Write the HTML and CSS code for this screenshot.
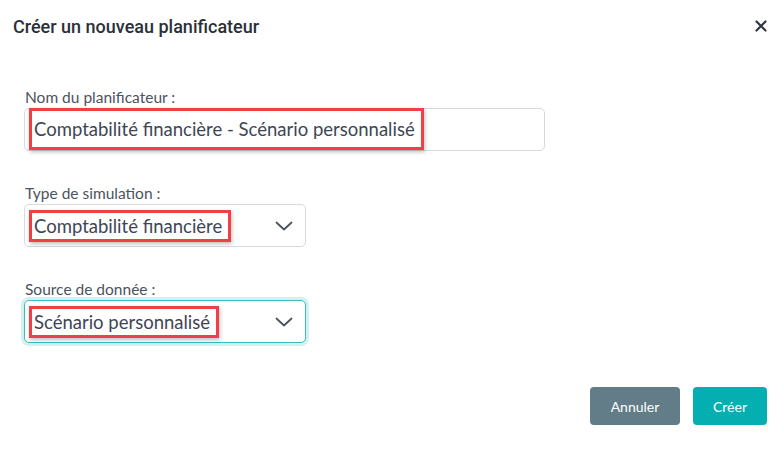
FILE: index.html
```html
<!DOCTYPE html>
<html lang="fr">
<head>
<meta charset="utf-8">
<title>Créer un nouveau planificateur</title>
<link rel="stylesheet" href="styles.css">
</head>
<body>
<div class="modal">
  <div class="header">
    <h1 class="title">Créer un nouveau planificateur</h1>
    <span class="close">
      <svg width="12" height="12" viewBox="0 0 12 12"><path d="M1.5 1.5 L10.5 10.5 M10.5 1.5 L1.5 10.5" stroke="#2f3640" stroke-width="2.2" stroke-linecap="round"/></svg>
    </span>
  </div>
  <div class="body">
    <div class="field">
      <label class="label">Nom du planificateur :</label>
      <div class="control wide">
        <span class="mark">Comptabilité financière - Scénario personnalisé</span>
      </div>
    </div>
    <div class="field">
      <label class="label">Type de simulation :</label>
      <div class="control select">
        <span class="mark">Comptabilité financière</span>
        <svg class="chev" width="18" height="10" viewBox="0 0 18 10"><path d="M1.5 1.5 L9 8.5 L16.5 1.5" fill="none" stroke="#4a5462" stroke-width="1.8" stroke-linecap="round" stroke-linejoin="round"/></svg>
      </div>
    </div>
    <div class="field">
      <label class="label">Source de donnée :</label>
      <div class="control select focus">
        <span class="mark">Scénario personnalisé</span>
        <svg class="chev" width="18" height="10" viewBox="0 0 18 10"><path d="M1.5 1.5 L9 8.5 L16.5 1.5" fill="none" stroke="#4a5462" stroke-width="1.8" stroke-linecap="round" stroke-linejoin="round"/></svg>
      </div>
    </div>
  </div>
  <div class="footer">
    <button class="btn cancel">Annuler</button>
    <button class="btn primary">Créer</button>
  </div>
</div>
</body>
</html>
```
FILE: styles.css
```css
* { box-sizing: border-box; }
html, body { margin: 0; padding: 0; background: #fff; }
body {
  width: 784px;
  height: 449px;
  font-family: "Lato", "Noto Sans", sans-serif;
  color: #3d4550;
  overflow: hidden;
}
.modal { display: flex; flex-direction: column; height: 449px; }
.header {
  display: flex;
  justify-content: space-between;
  align-items: center;
  padding: 14px 17px 0 13px;
  height: 38px;
}
.title {
  margin: 0;
  font-family: "Roboto", "Noto Sans", sans-serif;
  font-size: 18px;
  font-weight: 500;
  color: #2b3038;
}
.close { display: flex; width: 12px; height: 12px; }
.body {
  display: flex;
  flex-direction: column;
  gap: 33px;
  padding: 50px 0 0 24px;
}
.field { display: flex; flex-direction: column; }
.label {
  font-size: 15.5px;
  color: #4b535e;
  margin: 0 0 2px 1px;
  line-height: 18px;
}
.control {
  display: flex;
  align-items: center;
  height: 43px;
  border: 1px solid #d6d9de;
  border-radius: 5px;
  padding: 0 0 0 4px;
  background: #fff;
}
.control.wide { width: 521px; }
.control.select { width: 282px; justify-content: space-between; padding-right: 12px; }
.control.focus {
  border-color: #3cbcbe;
  box-shadow: 0 0 0 3px #d3f0f0;
}
.mark {
  border: 3px solid #ee4046;
  padding: 2px 6px 2px 2px;
  font-size: 18.5px;
  line-height: 22px;
  color: #3e4654;
  box-shadow: 1px 2px 4px rgba(0,0,0,0.25);
}
.wide .mark { padding: 7px 6px 7px 2px; margin-top: -2px; }
.chev { display: block; }
.footer {
  display: flex;
  justify-content: flex-end;
  gap: 13px;
  padding: 0 17px 0 0;
  margin-top: 44px;
}
.btn {
  height: 38px;
  border: none;
  border-radius: 4px;
  color: #fff;
  font-family: "Lato", "Noto Sans", sans-serif;
  font-size: 14px;
  padding: 0;
}
.cancel { width: 90px; background: #627c88; }
.primary { width: 74px; background: #04aeb1; }
```
